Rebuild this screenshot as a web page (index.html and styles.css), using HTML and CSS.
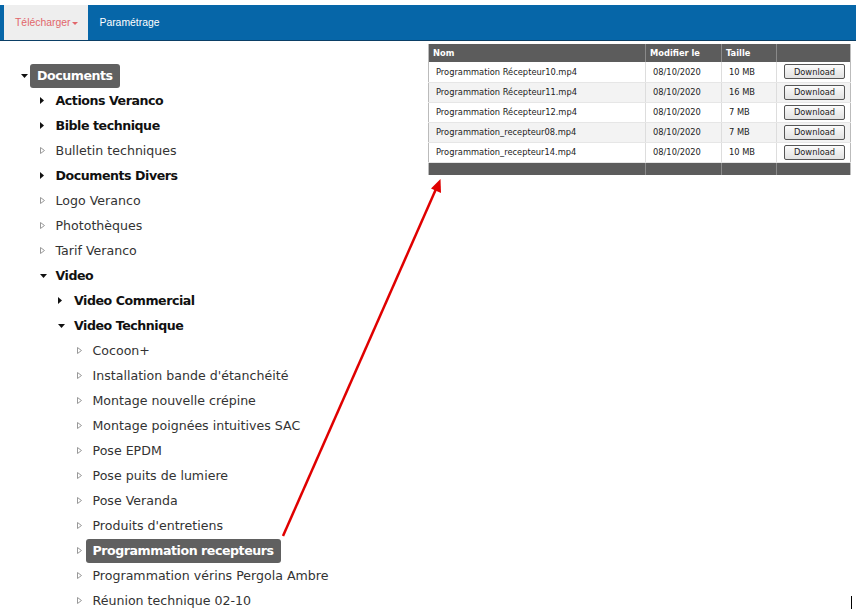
FILE: index.html
```html
<!DOCTYPE html>
<html lang="fr">
<head>
<meta charset="utf-8">
<title>Documents</title>
<link rel="stylesheet" href="styles.css">
</head>
<body>
<nav class="navbar">
  <a class="nav-item active">Télécharger<span class="caret"></span></a>
  <a class="nav-item">Paramétrage</a>
</nav>
<main class="main">
  <section class="tree">
    <ul class="level">
      <li>
        <div class="row"><span class="tw"><svg width="7" height="4" viewBox="0 0 7 4"><path d="M0 0H7L3.5 4Z" fill="#111"/></svg></span><span class="label folder selected">Documents</span></div>
        <ul class="level">
          <li><div class="row"><span class="tw"><svg width="4" height="7" viewBox="0 0 4 7"><path d="M0 0V7L4 3.5Z" fill="#111"/></svg></span><span class="label folder">Actions Veranco</span></div></li>
          <li><div class="row"><span class="tw"><svg width="4" height="7" viewBox="0 0 4 7"><path d="M0 0V7L4 3.5Z" fill="#111"/></svg></span><span class="label folder">Bible technique</span></div></li>
          <li><div class="row"><span class="tw"><svg width="5" height="7" viewBox="0 0 5 7"><path d="M0.5 0.5V6.5L4.5 3.5Z" fill="none" stroke="#999" stroke-width="1"/></svg></span><span class="label">Bulletin techniques</span></div></li>
          <li><div class="row"><span class="tw"><svg width="4" height="7" viewBox="0 0 4 7"><path d="M0 0V7L4 3.5Z" fill="#111"/></svg></span><span class="label folder">Documents Divers</span></div></li>
          <li><div class="row"><span class="tw"><svg width="5" height="7" viewBox="0 0 5 7"><path d="M0.5 0.5V6.5L4.5 3.5Z" fill="none" stroke="#999" stroke-width="1"/></svg></span><span class="label">Logo Veranco</span></div></li>
          <li><div class="row"><span class="tw"><svg width="5" height="7" viewBox="0 0 5 7"><path d="M0.5 0.5V6.5L4.5 3.5Z" fill="none" stroke="#999" stroke-width="1"/></svg></span><span class="label">Photothèques</span></div></li>
          <li><div class="row"><span class="tw"><svg width="5" height="7" viewBox="0 0 5 7"><path d="M0.5 0.5V6.5L4.5 3.5Z" fill="none" stroke="#999" stroke-width="1"/></svg></span><span class="label">Tarif Veranco</span></div></li>
          <li>
            <div class="row"><span class="tw"><svg width="7" height="4" viewBox="0 0 7 4"><path d="M0 0H7L3.5 4Z" fill="#111"/></svg></span><span class="label folder">Video</span></div>
            <ul class="level">
              <li><div class="row"><span class="tw"><svg width="4" height="7" viewBox="0 0 4 7"><path d="M0 0V7L4 3.5Z" fill="#111"/></svg></span><span class="label folder">Video Commercial</span></div></li>
              <li>
                <div class="row"><span class="tw"><svg width="7" height="4" viewBox="0 0 7 4"><path d="M0 0H7L3.5 4Z" fill="#111"/></svg></span><span class="label folder">Video Technique</span></div>
                <ul class="level">
                  <li><div class="row"><span class="tw"><svg width="5" height="7" viewBox="0 0 5 7"><path d="M0.5 0.5V6.5L4.5 3.5Z" fill="none" stroke="#999" stroke-width="1"/></svg></span><span class="label">Cocoon+</span></div></li>
                  <li><div class="row"><span class="tw"><svg width="5" height="7" viewBox="0 0 5 7"><path d="M0.5 0.5V6.5L4.5 3.5Z" fill="none" stroke="#999" stroke-width="1"/></svg></span><span class="label">Installation bande d'étanchéité</span></div></li>
                  <li><div class="row"><span class="tw"><svg width="5" height="7" viewBox="0 0 5 7"><path d="M0.5 0.5V6.5L4.5 3.5Z" fill="none" stroke="#999" stroke-width="1"/></svg></span><span class="label">Montage nouvelle crépine</span></div></li>
                  <li><div class="row"><span class="tw"><svg width="5" height="7" viewBox="0 0 5 7"><path d="M0.5 0.5V6.5L4.5 3.5Z" fill="none" stroke="#999" stroke-width="1"/></svg></span><span class="label">Montage poignées intuitives SAC</span></div></li>
                  <li><div class="row"><span class="tw"><svg width="5" height="7" viewBox="0 0 5 7"><path d="M0.5 0.5V6.5L4.5 3.5Z" fill="none" stroke="#999" stroke-width="1"/></svg></span><span class="label">Pose EPDM</span></div></li>
                  <li><div class="row"><span class="tw"><svg width="5" height="7" viewBox="0 0 5 7"><path d="M0.5 0.5V6.5L4.5 3.5Z" fill="none" stroke="#999" stroke-width="1"/></svg></span><span class="label">Pose puits de lumiere</span></div></li>
                  <li><div class="row"><span class="tw"><svg width="5" height="7" viewBox="0 0 5 7"><path d="M0.5 0.5V6.5L4.5 3.5Z" fill="none" stroke="#999" stroke-width="1"/></svg></span><span class="label">Pose Veranda</span></div></li>
                  <li><div class="row"><span class="tw"><svg width="5" height="7" viewBox="0 0 5 7"><path d="M0.5 0.5V6.5L4.5 3.5Z" fill="none" stroke="#999" stroke-width="1"/></svg></span><span class="label">Produits d'entretiens</span></div></li>
                  <li><div class="row"><span class="tw"><svg width="5" height="7" viewBox="0 0 5 7"><path d="M0.5 0.5V6.5L4.5 3.5Z" fill="none" stroke="#999" stroke-width="1"/></svg></span><span class="label folder selected">Programmation recepteurs</span></div></li>
                  <li><div class="row"><span class="tw"><svg width="5" height="7" viewBox="0 0 5 7"><path d="M0.5 0.5V6.5L4.5 3.5Z" fill="none" stroke="#999" stroke-width="1"/></svg></span><span class="label">Programmation vérins Pergola Ambre</span></div></li>
                  <li><div class="row"><span class="tw"><svg width="5" height="7" viewBox="0 0 5 7"><path d="M0.5 0.5V6.5L4.5 3.5Z" fill="none" stroke="#999" stroke-width="1"/></svg></span><span class="label">Réunion technique 02-10</span></div></li>
                </ul>
              </li>
            </ul>
          </li>
        </ul>
      </li>
    </ul>
  </section>
  <section class="files">
    <table class="grid">
      <thead>
        <tr><th class="c-name">Nom</th><th class="c-date">Modifier le</th><th class="c-size">Taille</th><th class="c-btn"></th></tr>
      </thead>
      <tbody>
        <tr><td>Programmation Récepteur10.mp4</td><td>08/10/2020</td><td>10 MB</td><td class="c-btn"><button class="btn">Download</button></td></tr>
        <tr class="alt"><td>Programmation Récepteur11.mp4</td><td>08/10/2020</td><td>16 MB</td><td class="c-btn"><button class="btn">Download</button></td></tr>
        <tr><td>Programmation Récepteur12.mp4</td><td>08/10/2020</td><td>7 MB</td><td class="c-btn"><button class="btn">Download</button></td></tr>
        <tr class="alt"><td>Programmation_recepteur08.mp4</td><td>08/10/2020</td><td>7 MB</td><td class="c-btn"><button class="btn">Download</button></td></tr>
        <tr><td>Programmation_recepteur14.mp4</td><td>08/10/2020</td><td>10 MB</td><td class="c-btn"><button class="btn">Download</button></td></tr>
      </tbody>
      <tfoot>
        <tr><td></td><td></td><td></td><td></td></tr>
      </tfoot>
    </table>
  </section>
</main>
<svg class="annotation" width="856" height="614" viewBox="0 0 856 614">
  <line x1="283" y1="536" x2="436" y2="189" stroke="#e00000" stroke-width="2.5"/>
  <path d="M440.5 179 L441 193 L431 188.5 Z" fill="#e00000"/>
</svg>
<span class="cursor"></span>
</body>
</html>
```
FILE: styles.css
```css
html, body {
  margin: 0;
  padding: 0;
  background: #fff;
}
body {
  width: 856px;
  height: 614px;
  overflow: hidden;
  position: relative;
  padding-top: 5px;
  box-sizing: border-box;
}
.navbar {
  display: flex;
  height: 35px;
  background: #0666a8;
  border-bottom: 1px solid #0b3f66;
  padding-left: 4px;
  font-family: "Liberation Sans", Arial, sans-serif;
  font-size: 10.4px;
}
.nav-item {
  display: flex;
  align-items: center;
  padding: 0 11px;
  color: #fff;
  text-decoration: none;
}
.nav-item.active {
  background: #eeeeee;
  color: #e2666b;
  padding: 0 10px 0 11px;
}
.caret {
  display: inline-block;
  width: 0;
  height: 0;
  margin-left: 2px;
  margin-top: 1px;
  border-left: 3px solid transparent;
  border-right: 3px solid transparent;
  border-top: 3px solid #e2666b;
}
.main {
  display: flex;
}
.tree {
  flex: 0 0 428px;
  padding-top: 22px;
  font-family: "DejaVu Sans", Verdana, sans-serif;
  font-size: 12.6px;
}
.level {
  list-style: none;
  margin: 0;
  padding: 0 0 0 18.5px;
}
.tree > .level {
  padding-left: 18px;
}
.row {
  display: flex;
  align-items: center;
  height: 25px;
}
.tw {
  flex: 0 0 12px;
  display: flex;
  align-items: center;
  justify-content: flex-start;
  padding-left: 3px;
  box-sizing: border-box;
}
.label {
  padding: 0 7px;
  height: 24px;
  line-height: 24px;
  color: #333;
  white-space: nowrap;
  border-radius: 3px;
}
.label.folder {
  font-weight: bold;
  color: #111;
  letter-spacing: -0.45px;
}
.label.selected {
  background: #606060;
  color: #fff;
}
.files {
  flex: 0 0 423px;
  padding-top: 3px;
}
.grid {
  width: 423px;
  border-collapse: collapse;
  font-family: "DejaVu Sans", Verdana, sans-serif;
  font-size: 8.3px;
  color: #222;
  border-left: 1px solid #bbb;
  border-right: 1px solid #bbb;
}
.grid th {
  background: #5c5c5c;
  color: #fff;
  font-weight: bold;
  text-align: left;
  height: 18px;
  padding: 0 4px;
  border-left: 1px solid #8a8a8a;
}
.grid th:first-child, .grid td:first-child {
  border-left: none;
}
.c-name { width: 208px; }
.c-date { width: 67px; }
.c-size { width: 46px; }
.grid td {
  height: 20px;
  padding: 0 7px;
  border-left: 1px solid #ddd;
  border-bottom: 1px solid #e6e6e6;
  box-sizing: border-box;
}
.grid tr.alt td {
  background: #f3f3f3;
}
.grid td.c-btn {
  text-align: center;
  padding: 0;
}
.btn {
  width: 61px;
  height: 15px;
  padding: 0;
  font-family: "DejaVu Sans", Verdana, sans-serif;
  font-size: 8.3px;
  color: #222;
  background: linear-gradient(#fbfbfb, #e2e2e2);
  border: 1px solid #555;
  border-radius: 2px;
  display: block;
  margin: 0 auto;
  position: relative;
  left: 1px;
}
.grid tfoot td {
  background: #5c5c5c;
  height: 13px;
  border-left: 1px solid #8a8a8a;
  border-bottom: none;
}
.annotation {
  position: absolute;
  left: 0;
  top: 0;
  pointer-events: none;
}
.cursor {
  position: absolute;
  left: 851px;
  top: 596px;
  width: 1px;
  height: 13px;
  background: #000;
}
```
